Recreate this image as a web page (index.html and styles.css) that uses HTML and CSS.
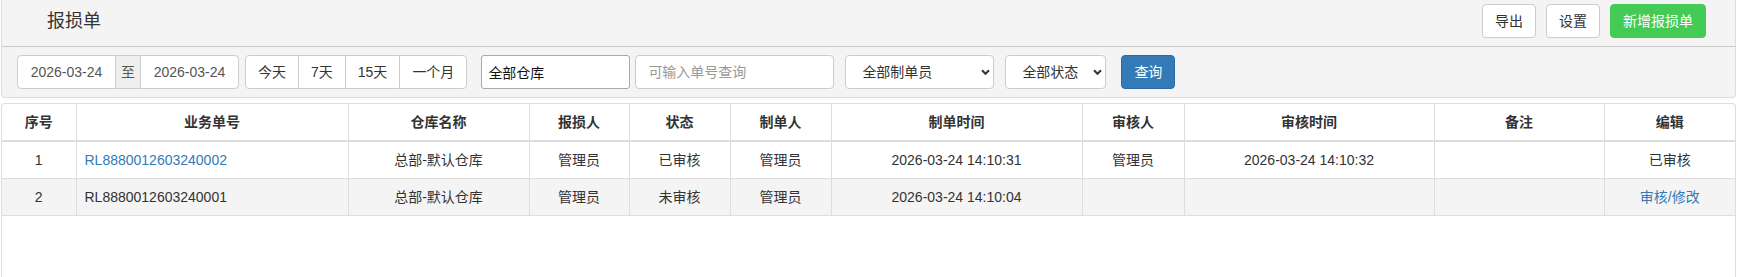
FILE: index.html
```html
<!DOCTYPE html>
<html lang="zh-CN">
<head>
    <meta charset="UTF-8">
    <meta name="viewport" content="width=device-width, initial-scale=1.0">
    <title>报损单</title>
    <link rel="stylesheet" href="styles.css">
</head>
<body>
    <div class="top-panel">
        <div class="page-head">
            <h1 class="page-title">报损单</h1>
            <div class="head-actions">
                <button class="btn">导出</button>
                <button class="btn">设置</button>
                <button class="btn btn-green">新增报损单</button>
            </div>
        </div>
        <div class="filter-bar">
            <div class="date-range">
                <input type="text" class="date-input" value="2026-03-24">
                <span class="range-sep">至</span>
                <input type="text" class="date-input" value="2026-03-24">
            </div>
            <div class="quick-days">
                <button class="btn">今天</button>
                <button class="btn">7天</button>
                <button class="btn">15天</button>
                <button class="btn">一个月</button>
            </div>
            <input type="text" class="store-input" value="全部仓库">
            <input type="text" class="search-input" placeholder="可输入单号查询">
            <div class="select-wrap">
                <select class="maker-select"><option>全部制单员</option></select>
                <svg class="select-arrow" viewBox="0 0 9 7"><path d="M1 1.2 L4.5 4.8 L8 1.2" fill="none" stroke="#333" stroke-width="2"/></svg>
            </div>
            <div class="select-wrap">
                <select class="state-select"><option>全部状态</option></select>
                <svg class="select-arrow" viewBox="0 0 9 7"><path d="M1 1.2 L4.5 4.8 L8 1.2" fill="none" stroke="#333" stroke-width="2"/></svg>
            </div>
            <button class="btn btn-blue">查询</button>
        </div>
    </div>

    <div class="list-panel">
        <table class="list-table">
            <colgroup>
                <col style="width: 74px">
                <col style="width: 272px">
                <col style="width: 181px">
                <col style="width: 100px">
                <col style="width: 101px">
                <col style="width: 101px">
                <col style="width: 251px">
                <col style="width: 102px">
                <col style="width: 250px">
                <col style="width: 170px">
                <col>
            </colgroup>
            <thead>
                <tr>
                    <th>序号</th>
                    <th>业务单号</th>
                    <th>仓库名称</th>
                    <th>报损人</th>
                    <th>状态</th>
                    <th>制单人</th>
                    <th>制单时间</th>
                    <th>审核人</th>
                    <th>审核时间</th>
                    <th>备注</th>
                    <th>编辑</th>
                </tr>
            </thead>
            <tbody>
                <tr>
                    <td>1</td>
                    <td class="cell-left"><a href="#">RL8880012603240002</a></td>
                    <td>总部-默认仓库</td>
                    <td>管理员</td>
                    <td>已审核</td>
                    <td>管理员</td>
                    <td>2026-03-24 14:10:31</td>
                    <td>管理员</td>
                    <td>2026-03-24 14:10:32</td>
                    <td></td>
                    <td>已审核</td>
                </tr>
                <tr class="row-grey">
                    <td>2</td>
                    <td class="cell-left">RL8880012603240001</td>
                    <td>总部-默认仓库</td>
                    <td>管理员</td>
                    <td>未审核</td>
                    <td>管理员</td>
                    <td>2026-03-24 14:10:04</td>
                    <td></td>
                    <td></td>
                    <td></td>
                    <td><a href="#">审核/修改</a></td>
                </tr>
            </tbody>
        </table>
    </div>
</body>
</html>
```

FILE: styles.css
```css
body {
    margin: 0;
    padding: 0 2px 0 1px;
    font-family: "Liberation Sans", "Noto Sans CJK SC", sans-serif;
    font-size: 14px;
    color: #333;
    background: #fff;
    overflow: hidden;
}
a {
    color: #337ab7;
    text-decoration: none;
}
.btn {
    height: 34px;
    box-sizing: border-box;
    padding: 0 12px;
    border: 1px solid #ccc;
    border-radius: 4px;
    background: #fff;
    color: #333;
    font: inherit;
    line-height: 32px;
    white-space: nowrap;
    cursor: pointer;
}
.btn-green {
    background: #43cb55;
    border-color: #43cb55;
    color: #fff;
}
.btn-blue {
    margin-left: 15px;
    background: #337ab7;
    border-color: #2e6da4;
    color: #fff;
}

/* top header + filters */
.top-panel {
    background: #f4f4f4;
    border: 1px solid #ddd;
    border-top: none;
    border-radius: 0 0 4px 4px;
}
.page-head {
    display: flex;
    align-items: flex-start;
    justify-content: space-between;
    padding: 4px 29px 8px 45px;
    border-bottom: 1px solid #c9c9c9;
}
.page-title {
    margin: 0;
    font-size: 18px;
    font-weight: normal;
    line-height: 34px;
    color: #333;
}
.head-actions {
    display: flex;
    gap: 10px;
}
.filter-bar {
    display: flex;
    align-items: center;
    padding: 8px 15px;
}
.date-range {
    display: flex;
}
.date-input {
    width: 99px;
    height: 34px;
    box-sizing: border-box;
    padding: 0 6px;
    border: 1px solid #ccc;
    background: #fff;
    color: #555;
    font: inherit;
    text-align: center;
}
.date-input:first-child {
    border-radius: 4px 0 0 4px;
}
.date-input:last-child {
    border-radius: 0 4px 4px 0;
}
.range-sep {
    width: 24px;
    height: 34px;
    box-sizing: border-box;
    border-top: 1px solid #ccc;
    border-bottom: 1px solid #ccc;
    background: #eee;
    color: #555;
    text-align: center;
    line-height: 32px;
}
.quick-days {
    display: flex;
    margin-left: 6px;
}
.quick-days .btn {
    border-radius: 0;
    margin-left: -1px;
}
.quick-days .btn:first-child {
    margin-left: 0;
    border-radius: 4px 0 0 4px;
}
.quick-days .btn:last-child {
    border-radius: 0 4px 4px 0;
}
.store-input {
    margin-left: 14px;
    width: 149px;
    height: 34px;
    box-sizing: border-box;
    padding: 0 6px;
    border: 1px solid #a9a9a9;
    border-radius: 3px;
    background: #fff;
    color: #111;
    font: inherit;
}
.search-input {
    margin-left: 5px;
    width: 199px;
    height: 34px;
    box-sizing: border-box;
    padding: 0 12px;
    border: 1px solid #ccc;
    border-radius: 4px;
    background: #fff;
    font: inherit;
}
.search-input::placeholder {
    color: #999;
}
.select-wrap {
    position: relative;
    margin-left: 11px;
    height: 34px;
}
.select-wrap select {
    height: 34px;
    box-sizing: border-box;
    padding: 0 0 0 16px;
    border: 1px solid #ccc;
    border-radius: 4px;
    background: #fff;
    color: #333;
    font: inherit;
    -webkit-appearance: none;
    appearance: none;
}
.maker-select {
    width: 149px;
}
.state-select {
    width: 101px;
}
.select-arrow {
    position: absolute;
    right: 4px;
    top: 14px;
    width: 9px;
    height: 7px;
    pointer-events: none;
}

/* list */
.list-panel {
    margin-top: 5px;
    height: 173px;
    border: 1px solid #ddd;
    border-bottom: none;
    border-radius: 4px 4px 0 0;
    background: #fff;
}
.list-table {
    width: 100%;
    border-collapse: collapse;
    table-layout: fixed;
}
.list-table th,
.list-table td {
    border: 1px solid #ddd;
    padding: 8px;
    line-height: 20px;
    text-align: center;
    white-space: nowrap;
    overflow: hidden;
}
.list-table th {
    border-top: none;
    border-bottom: 2px solid #ddd;
    font-weight: bold;
    color: #333;
}
.list-table th:first-child,
.list-table td:first-child {
    border-left: none;
}
.list-table th:last-child,
.list-table td:last-child {
    border-right: none;
}
.list-table .cell-left {
    text-align: left;
}
.row-grey td {
    background: #f4f4f4;
}
```
